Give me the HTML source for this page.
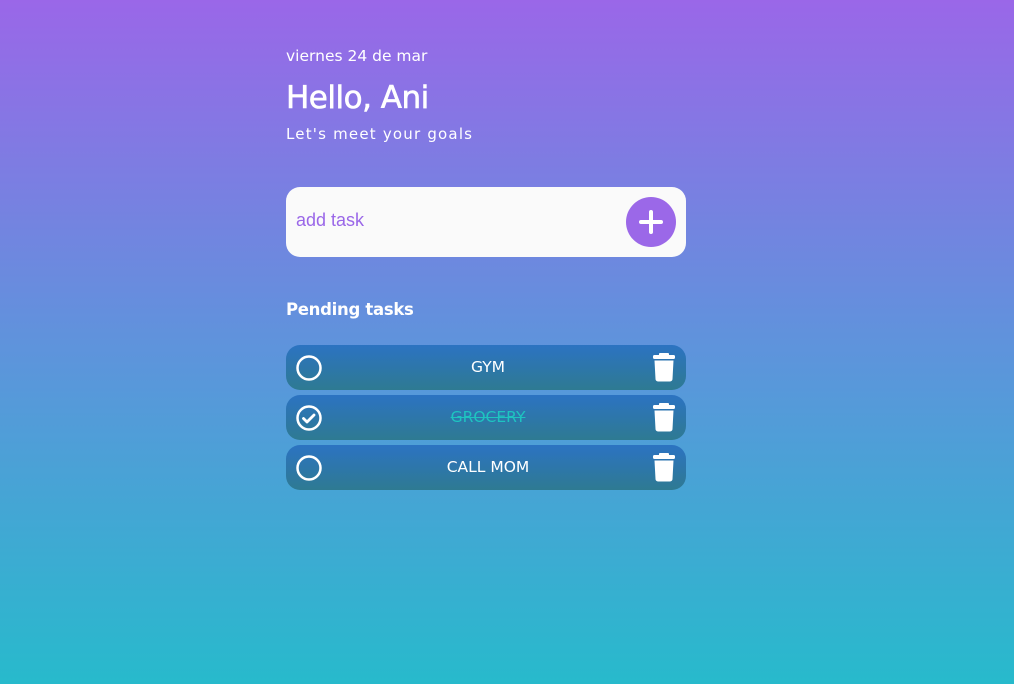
<!DOCTYPE html>
<html><head><style>
*{margin:0;padding:0;box-sizing:border-box}
body{width:1014px;height:684px;overflow:hidden;background:linear-gradient(180deg,#9a67e8 0%,#5f93dc 50%,#27bacc 100%);font-family:"DejaVu Sans","Liberation Sans",sans-serif;color:#fff;position:relative}
.a{position:absolute;left:286px}
.date{top:47px;font-size:15.5px}
.hello{top:80px;font-size:31px;font-weight:normal;letter-spacing:-0.5px;-webkit-text-stroke:0.6px #fff}
.sub{top:125px;font-size:15px;letter-spacing:1.2px}
.box{top:187px;width:400px;height:70px;background:#fafafa;border-radius:14px}
.box span{position:absolute;left:10px;top:23px;font-family:"Liberation Sans",sans-serif;font-size:18px;color:#9a67e8}
.plus{position:absolute;left:340px;top:10px;width:50px;height:50px;border-radius:50%;background:#9b68e8}
.pend{top:300px;font-size:16.5px;font-weight:bold;letter-spacing:-0.3px}
.row{width:400px;height:45px;border-radius:14px;background:linear-gradient(180deg,#2c73c2,#2e7a92)}
.row .t{position:absolute;left:0;right:0;top:13px;text-align:center;font-size:15.5px;padding-left:4px}
.row svg{position:absolute}
</style></head><body>
<div class="a date">viernes 24 de mar</div>
<div class="a hello">Hello, Ani</div>
<div class="a sub">Let's meet your goals</div>
<div class="a box"><span>add task</span><div class="plus"><svg width="50" height="50"><path d="M25 15v20M15 25h20" stroke="#fff" stroke-width="4" stroke-linecap="round"/></svg></div></div>
<div class="a pend">Pending tasks</div>

<div class="a row" style="top:345px"><svg width="30" height="30" style="left:8px;top:8px"><circle cx="15" cy="15" r="11.5" fill="none" stroke="#fff" stroke-width="2.5"/></svg><div class="t">GYM</div><svg width="26" height="30" style="left:366px;top:8px"><rect x="1" y="2" width="22" height="4" rx="1.5" fill="#fff"/><rect x="7" y="0" width="10" height="3" rx="1" fill="#fff"/><path d="M2.5 7.5h19l-1 18.5a2.5 2.5 0 0 1-2.5 2.5H6a2.5 2.5 0 0 1-2.5-2.5z" fill="#fff"/></svg></div>

<div class="a row" style="top:395px"><svg width="30" height="30" style="left:8px;top:8px"><circle cx="15" cy="15" r="11.5" fill="none" stroke="#fff" stroke-width="2.5"/><path d="M9.5 15.5l3.5 3.5 7-7" fill="none" stroke="#fff" stroke-width="2.8" stroke-linecap="round" stroke-linejoin="round"/></svg><div class="t" style="color:#1ec4c0;text-decoration:line-through">GROCERY</div><svg width="26" height="30" style="left:366px;top:8px"><rect x="1" y="2" width="22" height="4" rx="1.5" fill="#fff"/><rect x="7" y="0" width="10" height="3" rx="1" fill="#fff"/><path d="M2.5 7.5h19l-1 18.5a2.5 2.5 0 0 1-2.5 2.5H6a2.5 2.5 0 0 1-2.5-2.5z" fill="#fff"/></svg></div>

<div class="a row" style="top:445px"><svg width="30" height="30" style="left:8px;top:8px"><circle cx="15" cy="15" r="11.5" fill="none" stroke="#fff" stroke-width="2.5"/></svg><div class="t">CALL MOM</div><svg width="26" height="30" style="left:366px;top:8px"><rect x="1" y="2" width="22" height="4" rx="1.5" fill="#fff"/><rect x="7" y="0" width="10" height="3" rx="1" fill="#fff"/><path d="M2.5 7.5h19l-1 18.5a2.5 2.5 0 0 1-2.5 2.5H6a2.5 2.5 0 0 1-2.5-2.5z" fill="#fff"/></svg></div>
</body></html>
